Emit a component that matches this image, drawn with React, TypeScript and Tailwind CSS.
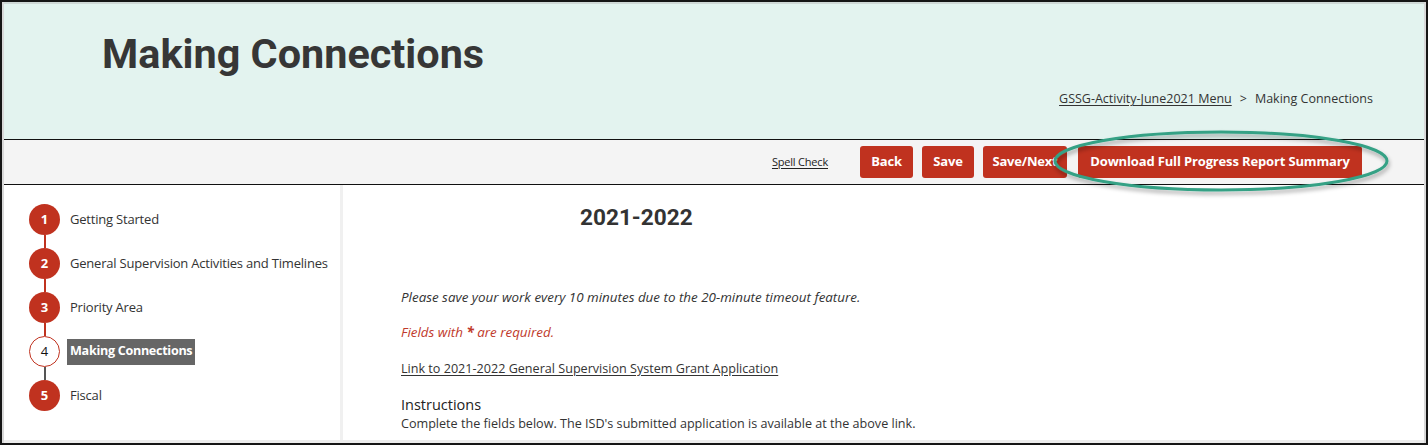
import React from "react";

const steps = [
  { n: 1, label: "Getting Started" },
  { n: 2, label: "General Supervision Activities and Timelines" },
  { n: 3, label: "Priority Area" },
  { n: 4, label: "Making Connections", active: true },
  { n: 5, label: "Fiscal" },
];

export default function App() {
  const body = { fontFamily: '"Open Sans", "Liberation Sans", sans-serif' };
  const head = { fontFamily: 'Roboto, "Liberation Sans", sans-serif' };
  return (
    <div className="relative w-[1428px] h-[445px] border-2 border-[#151515] bg-white overflow-hidden" style={body}>
      <div className="flex flex-col h-full">
        {/* Header */}
        <div className="h-[138px] bg-[#e3f3ef] border-b border-[#111] flex flex-col shrink-0">
          <h1 className="pl-[100px] pt-[32px] text-[41.4px] leading-none font-bold text-[#363636]" style={head}>
            Making Connections
          </h1>
          <div className="mt-[15px] pr-[53px] flex justify-end items-center text-[12.5px] text-[#333]">
            <span className="underline underline-offset-2">GSSG-Activity-June2021 Menu</span>
            <span className="mx-[8px]">&gt;</span>
            <span>Making Connections</span>
          </div>
        </div>
        {/* Toolbar */}
        <div className="h-[45px] bg-[#f4f4f4] border-b border-[#111] flex items-center justify-end pr-[64px] shrink-0">
          <span className="text-[11px] underline underline-offset-2 text-[#222] mr-[32px] tracking-[-0.2px]">Spell Check</span>
          <div className="flex gap-[9px]">
            <button className="h-[32px] w-[53px] rounded-[3px] bg-[#c0321f] text-white text-[13px] font-bold tracking-[-0.2px]">Back</button>
            <button className="h-[32px] w-[52px] rounded-[3px] bg-[#c0321f] text-white text-[13px] font-bold tracking-[-0.2px]">Save</button>
            <button className="h-[32px] w-[84px] rounded-[3px] bg-[#c0321f] text-white text-[13px] font-bold tracking-[-0.2px]">Save/Next</button>
            <button className="ml-[2px] h-[32px] w-[284px] rounded-[3px] bg-[#c0321f] text-white text-[13px] font-bold tracking-[-0.15px]">Download Full Progress Report Summary</button>
          </div>
        </div>
        {/* Body */}
        <div className="flex flex-1 border-b-[3px] border-[#ececec]">
          <div className="w-[341px] border-r-[3px] border-[#f0f0f0] pt-[19px] pl-[27px] shrink-0">
            {steps.map((s, i) => (
              <div key={s.n} className="flex flex-col">
                <div className="flex items-center">
                  <div
                    className={
                      s.active
                        ? "w-[31px] h-[31px] rounded-full bg-white border border-[#c0321f] flex items-center justify-center text-[13px] text-[#111]"
                        : "w-[31px] h-[31px] rounded-full bg-[#c0321f] flex items-center justify-center text-[13px] font-bold text-white"
                    }
                  >
                    {s.n}
                  </div>
                  {s.active ? (
                    <span className="ml-[7px] px-[3px] h-[26px] flex items-center bg-[#666] text-white text-[12.6px] font-bold tracking-[-0.3px]">{s.label}</span>
                  ) : (
                    <span className="ml-[10px] text-[13px] font-medium text-[#333] tracking-[-0.2px]">{s.label}</span>
                  )}
                </div>
                {i < steps.length - 1 && (
                  <div className={"ml-[15px] w-[1.5px] h-[13px] " + (i === 3 ? "bg-[#555]" : "bg-[#c0321f]")} />
                )}
              </div>
            ))}
          </div>
          <div className="flex-1 pl-[58px] text-[12.6px] text-[#333]">
            <div className="pl-[179px] pt-[22px] text-[22.6px] font-bold text-[#333] leading-none" style={head}>2021-2022</div>
            <p className="mt-[58px] italic text-[13.4px] leading-[18px]">Please save your work every 10 minutes due to the 20-minute timeout feature.</p>
            <p className="mt-[17px] italic text-[13.4px] leading-[18px] text-[#c0392b]">
              Fields with <span className="font-bold">*</span> are required.
            </p>
            <p className="mt-[19px] leading-[18px] underline underline-offset-2">Link to 2021-2022 General Supervision System Grant Application</p>
            <p className="mt-[17px] text-[14.5px] leading-[20px] text-[#222]">Instructions</p>
            <p className="leading-[18px]">Complete the fields below. The ISD's submitted application is available at the above link.</p>
          </div>
        </div>
      </div>
      {/* frame inner edge */}
      <div className="pointer-events-none absolute inset-0 shadow-[inset_2px_0_0_#d8d8d8,inset_-2px_0_0_#d8d8d8,inset_0_2px_0_#cfd8d6]" />
      {/* highlight ellipse */}
      <svg className="pointer-events-none absolute left-0 top-0" width="1428" height="445">
        <defs>
          <filter id="sh" x="-10%" y="-30%" width="120%" height="160%">
            <feDropShadow dx="1" dy="3" stdDeviation="2" floodColor="#000" floodOpacity="0.35" />
          </filter>
        </defs>
        <ellipse cx="1219" cy="159" rx="166" ry="29" fill="none" stroke="#35a185" strokeWidth="3" filter="url(#sh)" />
      </svg>
    </div>
  );
}
